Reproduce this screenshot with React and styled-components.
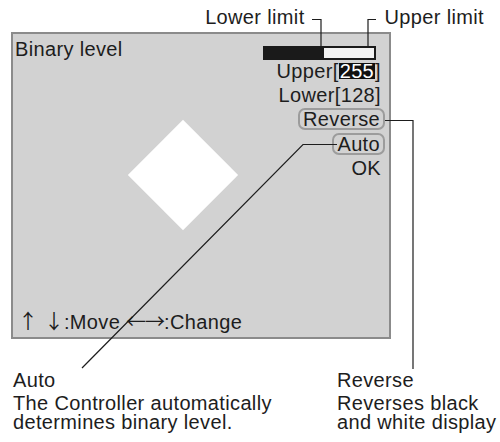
import React from 'react';
import styled, { createGlobalStyle } from 'styled-components';

const GlobalStyle = createGlobalStyle`
  html, body {
    margin: 0;
    padding: 0;
    background: #fff;
  }
  body {
    font-family: "Liberation Sans", Arial, sans-serif;
    color: #1d1d1d;
  }
`;

const Figure = styled.div`
  position: relative;
  width: 500px;
  height: 442px;
  overflow: hidden;
  font-size: 20px;
  letter-spacing: 0.35px;
`;

const TopLabels = styled.div`
  display: flex;
  justify-content: flex-end;
  gap: 80px;
  height: 22px;
  padding: 6px 16px 0 0;
  line-height: 22px;
`;

const Panel = styled.div`
  box-sizing: border-box;
  margin: 4px 0 0 11px;
  width: 380px;
  height: 307px;
  padding: 4px 8px 5px 2px;
  border: 2px solid #8b8b8b;
  background: #d2d2d2;
  display: grid;
  grid-template-columns: 1fr auto;
  grid-template-rows: 1fr auto;
`;

const Screen = styled.div`
  display: flex;
  flex-direction: column;
  align-items: flex-start;
`;

const Title = styled.div`
  line-height: 22px;
`;

const Diamond = styled.div`
  width: 78px;
  height: 78px;
  margin: 76px 0 0 129px;
  background: #fff;
  transform: rotate(45deg);
`;

const Menu = styled.div`
  display: flex;
  flex-direction: column;
  align-items: flex-end;
`;

const LevelBar = styled.div`
  box-sizing: border-box;
  width: 113px;
  height: 14px;
  margin: 8px 5px -1px 0;
  border: 2px solid #1a1a1a;
  background: #f2f2f2;
`;

const LevelFill = styled.div`
  height: 100%;
  background: #1a1a1a;
`;

const Row = styled.div`
  height: 24.2px;
  line-height: 24.2px;
  white-space: nowrap;
`;

const Option = styled.span`
  display: inline-block;
  line-height: 18px;
  padding: 0 3px;
  margin-right: -4px;
  border: 2px solid #9c9c9c;
  border-radius: 7px;
`;

const Value = styled.span`
  display: inline-block;
  line-height: 16px;
  padding: 0 1px;
  background: #111;
  color: #fff;
`;

const Footer = styled.div`
  grid-column: 1 / -1;
  line-height: 20px;
  padding-left: 3px;
`;

const Arrow = styled.span`
  font-family: "Noto Sans CJK JP", "DejaVu Sans", sans-serif;
  letter-spacing: ${({ $tight }) => ($tight ? '-1px' : '0')};
`;

const Captions = styled.div`
  display: grid;
  grid-template-columns: 324px auto;
  margin-top: 30px;
  padding-left: 13px;
`;

const Caption = styled.div`
  display: flex;
  flex-direction: column;
`;

const CaptionTitle = styled.div`
  line-height: 22px;
`;

const CaptionText = styled.div`
  margin-top: 3px;
  line-height: 18.5px;
`;

const Leaders = styled.svg`
  position: absolute;
  top: 0;
  left: 0;
  pointer-events: none;
`;

const lower = 128;

export default function App() {
  return (
    <>
      <GlobalStyle />
      <Figure>
        <TopLabels>
          <span>Lower limit</span>
          <span>Upper limit</span>
        </TopLabels>
        <Panel>
          <Screen>
            <Title>Binary level</Title>
            <Diamond />
          </Screen>
          <Menu>
            <LevelBar>
              <LevelFill style={{ width: `${(lower / 255) * 100 + 4}%` }} />
            </LevelBar>
            <Row>Upper[<Value>255</Value>]</Row>
            <Row>Lower[128]</Row>
            <Row><Option>Reverse</Option></Row>
            <Row><Option>Auto</Option></Row>
            <Row>OK</Row>
          </Menu>
          <Footer>
            <Arrow>↑</Arrow> <Arrow>↓</Arrow>:Move <Arrow $tight>←→</Arrow>:Change
          </Footer>
        </Panel>
        <Captions>
          <Caption>
            <CaptionTitle>Auto</CaptionTitle>
            <CaptionText>
              The Controller automatically<br />determines binary level.
            </CaptionText>
          </Caption>
          <Caption>
            <CaptionTitle>Reverse</CaptionTitle>
            <CaptionText>
              Reverses black<br />and white display
            </CaptionText>
          </Caption>
        </Captions>
        <Leaders width="500" height="442" fill="none" stroke="#1d1d1d" strokeWidth="1.2">
          <polyline points="312,19.5 321,19.5 321,46" />
          <polyline points="376,19.5 368,19.5 368,46" />
          <polyline points="385,120.5 413,120.5 413,369" />
          <polyline points="337,144.5 303,144.5 82,368" />
        </Leaders>
      </Figure>
    </>
  );
}
